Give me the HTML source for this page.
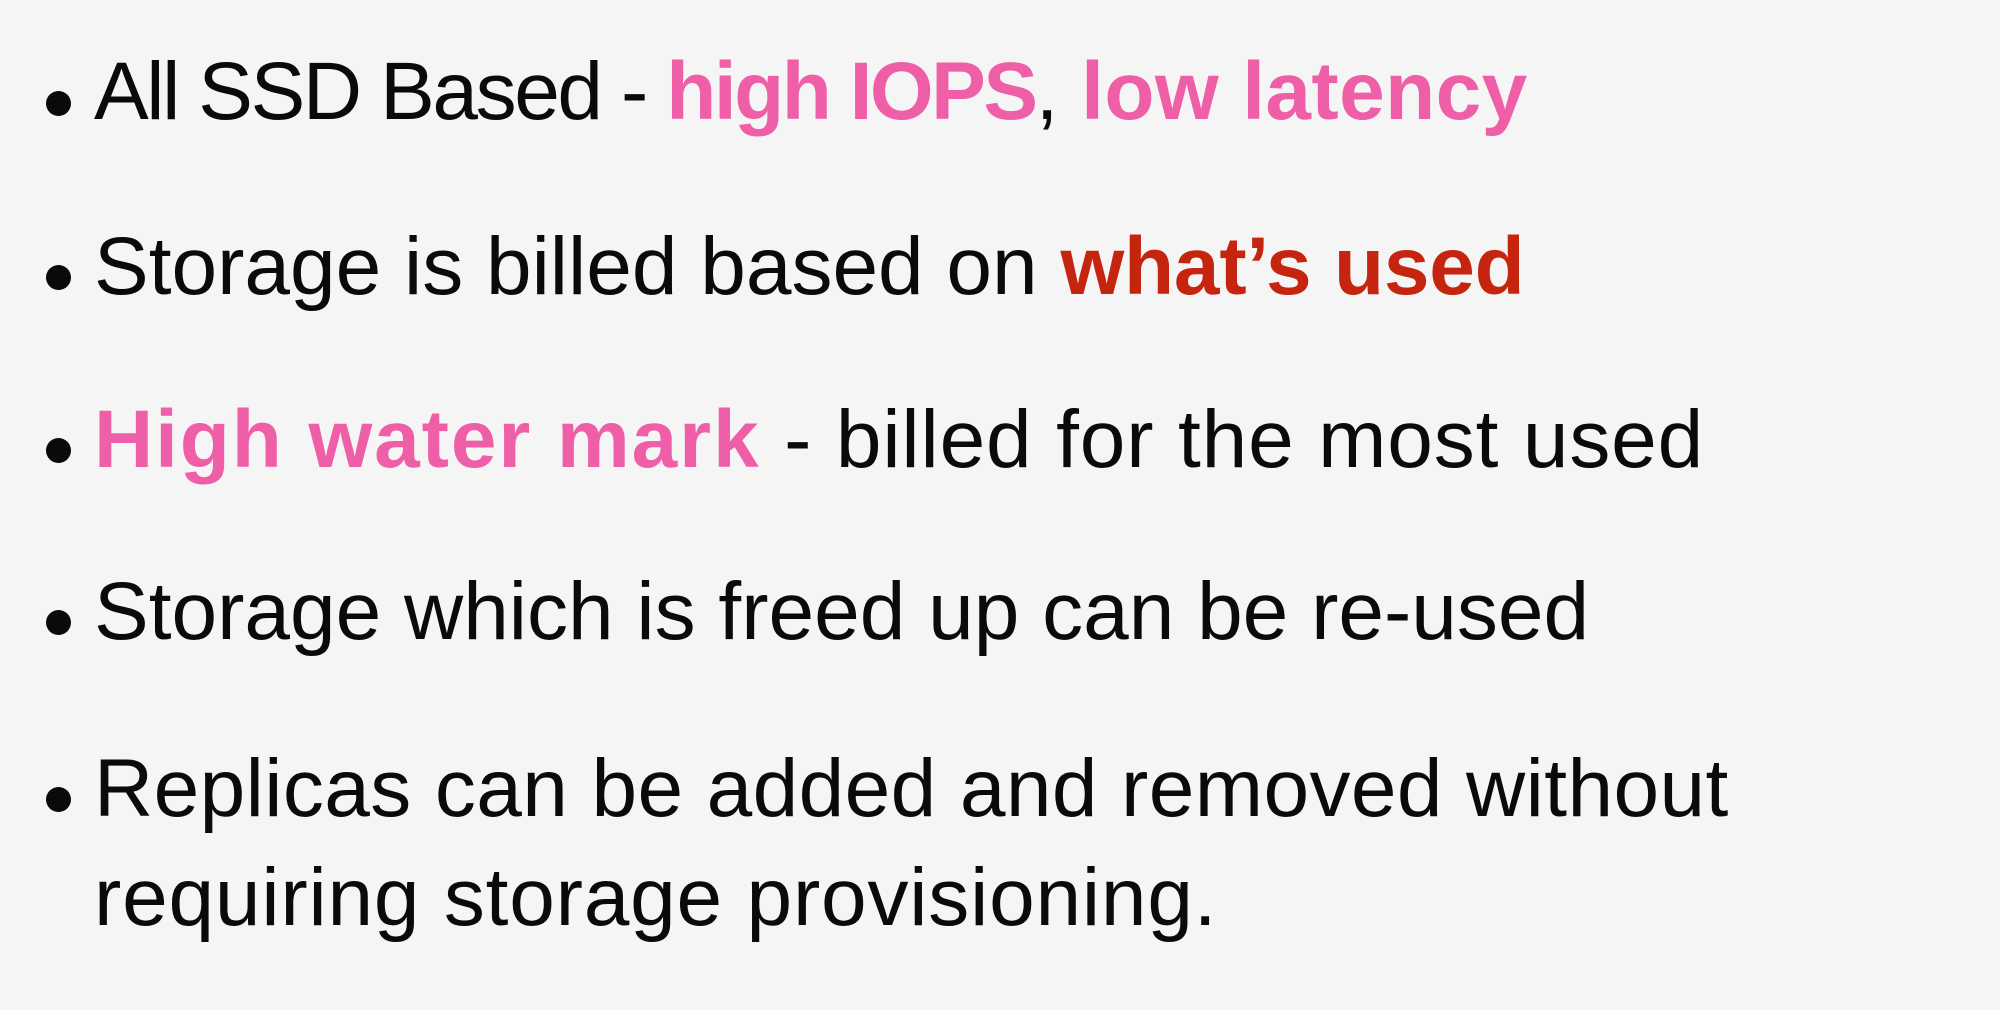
<!DOCTYPE html>
<html><head><meta charset="utf-8"><style>
html,body{margin:0;padding:0;width:2000px;height:1010px;background:#f5f5f5;overflow:hidden}
.l{position:absolute;left:94px;font-family:"Liberation Sans",sans-serif;font-size:82px;line-height:82px;color:#0a0a0a;white-space:nowrap;letter-spacing:0}
.b{position:absolute;left:46px;width:25px;height:25px;border-radius:50%;background:#0a0a0a}
.p{color:#ee5fa7;font-weight:bold}
.r{color:#c5250f;font-weight:bold}
</style></head><body>
<div class="b" style="top:91px"></div>
<div class="l" style="top:51px"><span style="letter-spacing:-2.4px">All SSD Based - </span><span class="p" style="letter-spacing:-2.5px">high IOPS</span>, <span class="p" style="letter-spacing:0.4px">low latency</span></div>
<div class="b" style="top:265px"></div>
<div class="l" style="top:226px">Storage is billed based on <span class="r" style="letter-spacing:-0.2px">what’s used</span></div>
<div class="b" style="top:438px"></div>
<div class="l" style="top:399px"><span class="p" style="letter-spacing:1.9px">High water mark</span><span style="letter-spacing:0.85px"> - billed for the most used</span></div>
<div class="b" style="top:610px"></div>
<div class="l" style="top:571px">Storage which is freed up can be re-used</div>
<div class="b" style="top:787px"></div>
<div class="l" style="top:748px;letter-spacing:0.4px">Replicas can be added and removed without</div>
<div class="l" style="top:857px;letter-spacing:0.8px">requiring storage provisioning.</div>
</body></html>
